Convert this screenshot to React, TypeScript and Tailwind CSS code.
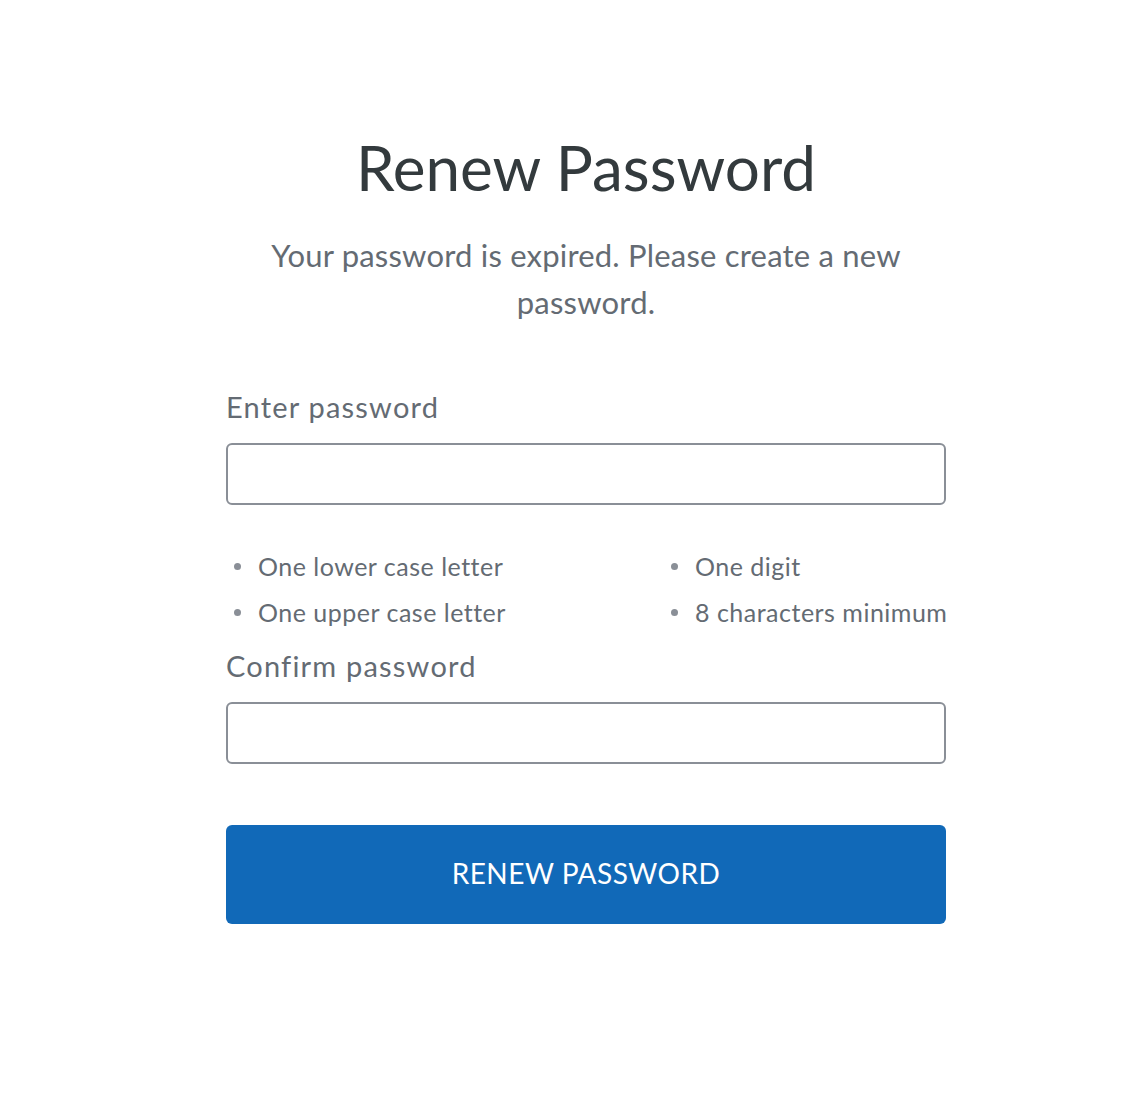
const rules = [
  "One lower case letter",
  "One digit",
  "One upper case letter",
  "8 characters minimum",
];

export default function App() {
  return (
    <div
      className="min-h-[1118px] w-[1140px] bg-white pl-[226px] pt-[129px]"
      style={{ fontFamily: "Lato, 'Open Sans', sans-serif" }}
    >
      <div className="flex w-[720px] flex-col">
        <h1 className="text-center text-[62px] leading-[76px] font-normal text-[#333a3d]">
          Renew Password
        </h1>
        <p className="mx-auto mt-[27px] w-[660px] text-center text-[31px] leading-[47px] tracking-[0.2px] text-[#646b73]">
          Your password is expired. Please create a new password.
        </p>

        <label className="mt-[61px] text-[29px] leading-[40px] tracking-[1.2px] text-[#646b73]">
          Enter password
        </label>
        <input
          type="password"
          className="mt-4 h-[62px] w-full rounded-[6px] border-2 border-[#8a8f97] bg-white px-4 outline-none"
        />

        <ul className="mt-[38px] grid grid-cols-[437px_1fr] text-[25px] leading-[46px] tracking-[0.5px] text-[#646b73]">
          {rules.map((rule) => (
            <li
              key={rule}
              className="flex items-center gap-[17px] whitespace-nowrap pl-[8px]"
            >
              <span className="h-[7px] w-[7px] shrink-0 rounded-full bg-[#8a8f97]" />
              {rule}
            </li>
          ))}
        </ul>

        <label className="mt-[11px] text-[29px] leading-[40px] tracking-[1.2px] text-[#646b73]">
          Confirm password
        </label>
        <input
          type="password"
          className="mt-4 h-[62px] w-full rounded-[6px] border-2 border-[#8a8f97] bg-white px-4 outline-none"
        />

        <button className="mt-[61px] h-[99px] w-full rounded-[6px] bg-[#1169b8] pb-[3px] text-[28px] tracking-[0.5px] text-white">
          RENEW PASSWORD
        </button>
      </div>
    </div>
  );
}
